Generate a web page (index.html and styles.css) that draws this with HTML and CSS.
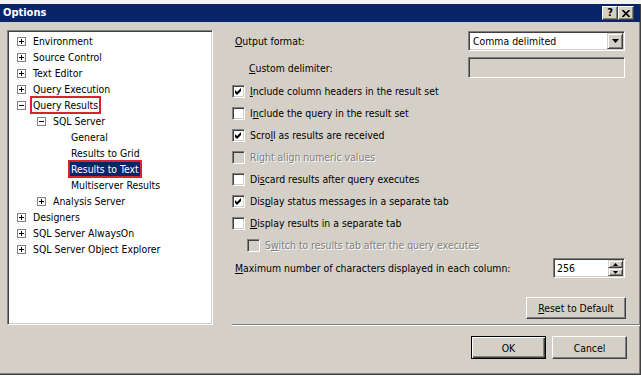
FILE: index.html
```html
<!DOCTYPE html>
<html>
<head>
<meta charset="utf-8">
<title>Options</title>
<link rel="stylesheet" href="styles.css">
</head>
<body>
<div class="backdrop"></div>
<div class="dialog">
  <div class="titlebar">
    <span class="title">Options</span>
    <div class="tbtns">
      <span class="tbtn q">?</span>
      <span class="tbtn"><svg width="8" height="7" viewBox="0 0 8 7"><path d="M0.5 0 L7.5 7 M7.5 0 L0.5 7" stroke="#000" stroke-width="1.6"/></svg></span>
    </div>
  </div>
  <div class="content">
    <div class="tree">
      <div class="node l0"><svg class="exp" width="9" height="9" viewBox="0 0 9 9"><rect x="0.5" y="0.5" width="8" height="8" fill="#fff" stroke="#808080"/><path d="M2 4.5h5M4.5 2v5" stroke="#000"/></svg><span class="lbl">Environment</span></div>
      <div class="node l0"><svg class="exp" width="9" height="9" viewBox="0 0 9 9"><rect x="0.5" y="0.5" width="8" height="8" fill="#fff" stroke="#808080"/><path d="M2 4.5h5M4.5 2v5" stroke="#000"/></svg><span class="lbl">Source Control</span></div>
      <div class="node l0"><svg class="exp" width="9" height="9" viewBox="0 0 9 9"><rect x="0.5" y="0.5" width="8" height="8" fill="#fff" stroke="#808080"/><path d="M2 4.5h5M4.5 2v5" stroke="#000"/></svg><span class="lbl">Text Editor</span></div>
      <div class="node l0"><svg class="exp" width="9" height="9" viewBox="0 0 9 9"><rect x="0.5" y="0.5" width="8" height="8" fill="#fff" stroke="#808080"/><path d="M2 4.5h5M4.5 2v5" stroke="#000"/></svg><span class="lbl">Query Execution</span></div>
      <div class="node l0"><svg class="exp" width="9" height="9" viewBox="0 0 9 9"><rect x="0.5" y="0.5" width="8" height="8" fill="#fff" stroke="#808080"/><path d="M2 4.5h5" stroke="#000"/></svg><span class="lbl marked">Query Results</span></div>
      <div class="node l1"><svg class="exp" width="9" height="9" viewBox="0 0 9 9"><rect x="0.5" y="0.5" width="8" height="8" fill="#fff" stroke="#808080"/><path d="M2 4.5h5" stroke="#000"/></svg><span class="lbl">SQL Server</span></div>
      <div class="node l2"><span class="lbl">General</span></div>
      <div class="node l2"><span class="lbl">Results to Grid</span></div>
      <div class="node l2"><span class="lbl marked selected">Results to Text</span></div>
      <div class="node l2"><span class="lbl">Multiserver Results</span></div>
      <div class="node l1"><svg class="exp" width="9" height="9" viewBox="0 0 9 9"><rect x="0.5" y="0.5" width="8" height="8" fill="#fff" stroke="#808080"/><path d="M2 4.5h5M4.5 2v5" stroke="#000"/></svg><span class="lbl">Analysis Server</span></div>
      <div class="node l0"><svg class="exp" width="9" height="9" viewBox="0 0 9 9"><rect x="0.5" y="0.5" width="8" height="8" fill="#fff" stroke="#808080"/><path d="M2 4.5h5M4.5 2v5" stroke="#000"/></svg><span class="lbl">Designers</span></div>
      <div class="node l0"><svg class="exp" width="9" height="9" viewBox="0 0 9 9"><rect x="0.5" y="0.5" width="8" height="8" fill="#fff" stroke="#808080"/><path d="M2 4.5h5M4.5 2v5" stroke="#000"/></svg><span class="lbl">SQL Server AlwaysOn</span></div>
      <div class="node l0"><svg class="exp" width="9" height="9" viewBox="0 0 9 9"><rect x="0.5" y="0.5" width="8" height="8" fill="#fff" stroke="#808080"/><path d="M2 4.5h5M4.5 2v5" stroke="#000"/></svg><span class="lbl">SQL Server Object Explorer</span></div>
    </div>
    <div class="right">
      <div class="row r-output">
        <span class="lbl-main"><u>O</u>utput format:</span>
        <div class="select">
          <span class="sel-text">Comma delimited</span>
          <span class="dd-btn"><svg width="7" height="4" viewBox="0 0 7 4"><path d="M0 0h7L3.5 4z" fill="#000"/></svg></span>
        </div>
      </div>
      <div class="row r-custom">
        <span class="lbl-sub"><u>C</u>ustom delimiter:</span>
        <div class="textbox disabled"></div>
      </div>
      <div class="checks">
        <div class="cbrow"><span class="cb"><svg width="7" height="7" viewBox="0 0 7 7"><path d="M0 2L2 4L6 0V3L2 7L0 5Z" fill="#000"/></svg></span><span><u>I</u>nclude column headers in the result set</span></div>
        <div class="cbrow"><span class="cb"></span><span>I<u>n</u>clude the query in the result set</span></div>
        <div class="cbrow"><span class="cb"><svg width="7" height="7" viewBox="0 0 7 7"><path d="M0 2L2 4L6 0V3L2 7L0 5Z" fill="#000"/></svg></span><span>Scro<u>l</u>l as results are received</span></div>
        <div class="cbrow off"><span class="cb"></span><span>Ri<u>g</u>ht align numeric values</span></div>
        <div class="cbrow"><span class="cb"></span><span>Di<u>s</u>card results after query executes</span></div>
        <div class="cbrow"><span class="cb"><svg width="7" height="7" viewBox="0 0 7 7"><path d="M0 2L2 4L6 0V3L2 7L0 5Z" fill="#000"/></svg></span><span>Dis<u>p</u>lay status messages in a separate tab</span></div>
        <div class="cbrow"><span class="cb"></span><span><u>D</u>isplay results in a separate tab</span></div>
        <div class="cbrow off sub"><span class="cb"></span><span>S<u>w</u>itch to results tab after the query executes</span></div>
      </div>
      <div class="row r-max">
        <span class="lbl-main"><u>M</u>aximum number of characters displayed in each column:</span>
        <div class="spinner">
          <span class="spin-text">256</span>
          <span class="spin-btns">
            <span class="spin-btn"><svg width="5" height="3" viewBox="0 0 5 3"><path d="M0 3h5L2.5 0z" fill="#000"/></svg></span>
            <span class="spin-btn"><svg width="5" height="3" viewBox="0 0 5 3"><path d="M0 0h5L2.5 3z" fill="#000"/></svg></span>
          </span>
        </div>
      </div>
      <div class="btn reset"><span><u>R</u>eset to Default</span></div>
      <div class="separator"></div>
      <div class="footer">
        <div class="btn default">OK</div>
        <div class="btn">Cancel</div>
      </div>
    </div>
  </div>
</div>
</body>
</html>
```
FILE: styles.css
```css
html, body {
  margin: 0;
  padding: 0;
}
body {
  width: 641px;
  height: 377px;
  overflow: hidden;
  background: #ffffff;
  font-family: "DejaVu Sans Condensed", "DejaVu Sans", sans-serif;
  font-size: 10.4px;
  color: #000;
}
.backdrop {
  height: 4px;
  background: #f4f4f4;
}
.dialog {
  box-sizing: border-box;
  width: 641px;
  height: 371px;
  background: #d4d0c8;
  border-right: 1px solid #404040;
  border-bottom: 1px solid #404040;
  box-shadow: inset -1px -1px #808080;
  display: flex;
  flex-direction: column;
}
.titlebar {
  height: 18px;
  flex: none;
  background: #0a246a;
  color: #fff;
  display: flex;
  align-items: center;
  padding: 0 6px 0 3px;
}
.title {
  font-weight: bold;
  font-size: 11px;
  line-height: 18px;
}
.tbtns {
  margin-left: auto;
  display: flex;
}
.tbtn {
  box-sizing: border-box;
  width: 16px;
  height: 14px;
  background: #d4d0c8;
  border: 1px solid;
  border-color: #fff #404040 #404040 #fff;
  box-shadow: inset -1px -1px #808080;
  display: flex;
  align-items: center;
  justify-content: center;
  color: #000;
}
.tbtn.q {
  font-weight: bold;
  font-size: 11px;
  line-height: 12px;
}
.content {
  display: flex;
  align-items: flex-start;
  padding: 8px 0 0 7px;
}
.tree {
  box-sizing: border-box;
  width: 206px;
  height: 295px;
  flex: none;
  background: #fff;
  border: 1px solid;
  border-color: #808080 #fff #fff #808080;
  box-shadow: inset 1px 1px #404040, inset -1px -1px #d4d0c8;
  padding-top: 2px;
}
.node {
  height: 16px;
  display: flex;
  align-items: center;
  white-space: nowrap;
}
.node .exp {
  flex: none;
  margin-right: 6px;
}
.l0 { padding-left: 9px; }
.l1 { padding-left: 29px; }
.l2 { padding-left: 62px; }
.lbl {
  padding: 0 1px;
  line-height: 14px;
  height: 14px;
}
.lbl.marked {
  outline: 2px solid #d8222f;
}
.lbl.selected {
  background: #0a246a;
  color: #fff;
}
.right {
  flex: 1;
  margin-left: 19px;
  padding-right: 13px;
  display: flex;
  flex-direction: column;
}
.row {
  display: flex;
  align-items: center;
  white-space: nowrap;
}
.r-output {
  height: 20px;
  margin-top: 1px;
}
.lbl-main { padding-left: 3px; }
.lbl-sub { padding-left: 17px; }
.select, .textbox, .spinner {
  box-sizing: border-box;
  border: 1px solid;
  border-color: #808080 #fff #fff #808080;
  box-shadow: inset 1px 1px #404040, inset -1px -1px #d4d0c8;
  margin-left: auto;
  margin-right: 2px;
}
.select {
  width: 157px;
  height: 20px;
  background: #fff;
  display: flex;
  align-items: center;
  padding: 1px;
}
.sel-text {
  flex: 1;
  padding-left: 3px;
}
.dd-btn, .spin-btn {
  box-sizing: border-box;
  background: #d4d0c8;
  border: 1px solid;
  border-color: #d4d0c8 #404040 #404040 #d4d0c8;
  box-shadow: inset 1px 1px #fff, inset -1px -1px #808080;
  display: flex;
  align-items: center;
  justify-content: center;
}
.dd-btn {
  width: 16px;
  height: 16px;
}
.r-custom {
  height: 21px;
  margin-top: 6px;
}
.textbox {
  width: 157px;
  height: 21px;
  background: #d4d0c8;
}
.checks {
  margin-top: 2px;
  display: flex;
  flex-direction: column;
}
.cbrow {
  height: 22px;
  display: flex;
  align-items: center;
  white-space: nowrap;
}
.cbrow.sub { padding-left: 15px; }
.cb {
  box-sizing: border-box;
  flex: none;
  width: 13px;
  height: 13px;
  margin-right: 5px;
  background: #fff;
  border: 1px solid;
  border-color: #808080 #fff #fff #808080;
  box-shadow: inset 1px 1px #404040, inset -1px -1px #d4d0c8;
  display: flex;
  align-items: center;
  justify-content: center;
}
.cbrow.off .cb { background: #d4d0c8; }
.cbrow.off span:last-child {
  color: #808080;
  text-shadow: 1px 1px 0 #fff;
}
.r-max {
  height: 20px;
  margin-top: 2px;
}
.spinner {
  width: 72px;
  height: 20px;
  background: #fff;
  display: flex;
  align-items: center;
  padding: 1px;
}
.spin-text {
  flex: 1;
  padding-left: 2px;
}
.spin-btns {
  display: flex;
  flex-direction: column;
}
.spin-btn {
  width: 15px;
  height: 8px;
}
.btn {
  box-sizing: border-box;
  background: #d4d0c8;
  border: 1px solid;
  border-color: #fff #404040 #404040 #fff;
  box-shadow: inset -1px -1px #808080;
  display: flex;
  align-items: center;
  justify-content: center;
  white-space: nowrap;
}
.reset {
  width: 100px;
  height: 22px;
  margin-top: 19px;
  align-self: flex-end;
  margin-right: 1px;
}
.separator {
  margin-top: 5px;
  margin-right: -13px;
  border-top: 1px solid #808080;
  border-bottom: 1px solid #fff;
}
.footer {
  margin-top: 10px;
  display: flex;
  justify-content: flex-end;
  gap: 6px;
}
.footer .btn {
  width: 75px;
  height: 23px;
}
.btn.default {
  border: 1px solid #000;
  box-shadow: inset 1px 1px #fff, inset -1px -1px #404040, inset -2px -2px #808080;
}
```
